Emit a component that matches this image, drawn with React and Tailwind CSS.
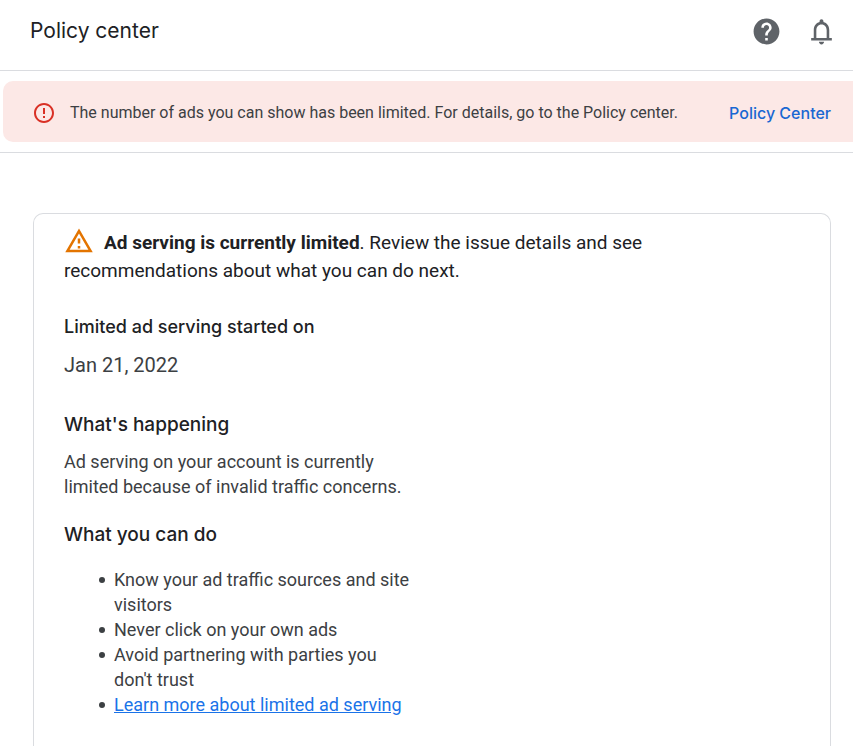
function Icon({ path, className }) {
  return (
    <svg viewBox="0 0 24 24" fill="currentColor" aria-hidden="true" className={className}>
      <path d={path} />
    </svg>
  );
}

function Bullet({ children }) {
  return (
    <li className="flex before:mt-2.5 before:mr-[9px] before:size-1.5 before:shrink-0 before:rounded-full before:bg-[#3c4043]">
      <span>{children}</span>
    </li>
  );
}

const HELP =
  "M12 2C6.48 2 2 6.48 2 12s4.48 10 10 10 10-4.48 10-10S17.52 2 12 2zm1 17h-2v-2h2v2zm2.07-7.75l-.9.92C13.45 12.9 13 13.5 13 15h-2v-.5c0-1.1.45-2.1 1.17-2.83l1.24-1.26c.37-.36.59-.86.59-1.41 0-1.1-.9-2-2-2s-2 .9-2 2H8c0-2.21 1.79-4 4-4s4 1.79 4 4c0 .88-.36 1.68-.93 2.25z";
const BELL =
  "M18 17v-6c0-3.07-1.63-5.64-4.5-6.32V4c0-.83-.67-1.5-1.5-1.5s-1.5.67-1.5 1.5v.68C7.64 5.36 6 7.92 6 11v6H4v2h16v-2h-2zm-2 0H8v-6c0-2.48 1.51-4.5 4-4.5s4 2.02 4 4.5v6zm-4 5c1.1 0 2-.9 2-2h-4c0 1.1.9 2 2 2z";
const ERROR =
  "M11 15h2v2h-2zm0-8h2v6h-2zm.99-5C6.47 2 2 6.48 2 12s4.47 10 9.99 10C17.52 22 22 17.52 22 12S17.52 2 11.99 2zM12 20c-4.42 0-8-3.58-8-8s3.58-8 8-8 8 3.58 8 8-3.58 8-8 8z";
const WARNING =
  "M12 5.99L19.53 19H4.47L12 5.99M12 2L1 21h22L12 2zm1 14h-2v2h2v-2zm0-6h-2v4h2v-4z";

export default function App() {
  return (
    <div className="flex min-h-screen flex-col bg-white pr-1.5 font-[Roboto,sans-serif] text-[#3c4043]">
      <header className="flex h-[71px] items-center justify-between border-b border-[#dadce0] pr-4 pb-2 pl-[30px]">
        <h1 className="font-[Inter,sans-serif] text-[21px] text-[#202124]">Policy center</h1>
        <div className="flex gap-6 text-[#5f6368]">
          <button type="button" aria-label="Help">
            <Icon path={HELP} className="size-[31px]" />
          </button>
          <button type="button" aria-label="Notifications">
            <Icon path={BELL} className="size-[31px]" />
          </button>
        </div>
      </header>

      <div className="border-b border-[#dadce0] py-2.5 pl-[3px]">
        <div role="alert" className="flex min-h-[61px] items-center rounded-l-[10px] bg-[#fce8e6] pt-0.5 pr-[22px] pl-[29px]">
          <Icon path={ERROR} className="mr-3.5 size-6 shrink-0 text-[#d93025]" />
          <p className="text-base">
            The number of ads you can show has been limited. For details, go to the Policy center.
          </p>
          <a href="#policy" className="ml-auto shrink-0 font-[Inter,sans-serif] text-base font-medium text-[#1967d2]">
            Policy Center
          </a>
        </div>
      </div>

      <main className="mt-[60px] mr-[22px] ml-[33px] flex-1 rounded-t-[10px] border border-b-0 border-[#dadce0] px-[30px] pt-[15px]">
        <p className="max-w-[600px] text-[19px] leading-7 text-[#202124]">
          <Icon path={WARNING} className="-mt-1.5 mr-2.5 inline-block size-[30px] align-middle text-[#e37400]" />
          <strong className="font-bold">Ad serving is currently limited</strong>. Review the issue details and see
          recommendations about what you can do next.
        </p>

        <h2 className="mt-7 font-[Inter,sans-serif] text-lg leading-7 font-medium text-[#202124]">
          Limited ad serving started on
        </h2>
        <p className="mt-[10px] text-xl leading-7">Jan 21, 2022</p>

        <h2 className="mt-8 font-[Inter,sans-serif] text-[19px] leading-7 font-medium text-[#202124]">
          What's happening
        </h2>
        <p className="mt-[10px] max-w-[350px] text-lg leading-[25px]">
          Ad serving on your account is currently limited because of invalid traffic concerns.
        </p>

        <h2 className="mt-[22px] font-[Inter,sans-serif] text-[19px] leading-7 font-medium text-[#202124]">
          What you can do
        </h2>
        <ul className="mt-[18px] max-w-[350px] pl-[35px] text-lg leading-[25px]">
          <Bullet>Know your ad traffic sources and site visitors</Bullet>
          <Bullet>Never click on your own ads</Bullet>
          <Bullet>Avoid partnering with parties you don't trust</Bullet>
          <Bullet>
            <a href="#learn" className="text-[#1a73e8] underline">
              Learn more about limited ad serving
            </a>
          </Bullet>
        </ul>
      </main>
    </div>
  );
}
